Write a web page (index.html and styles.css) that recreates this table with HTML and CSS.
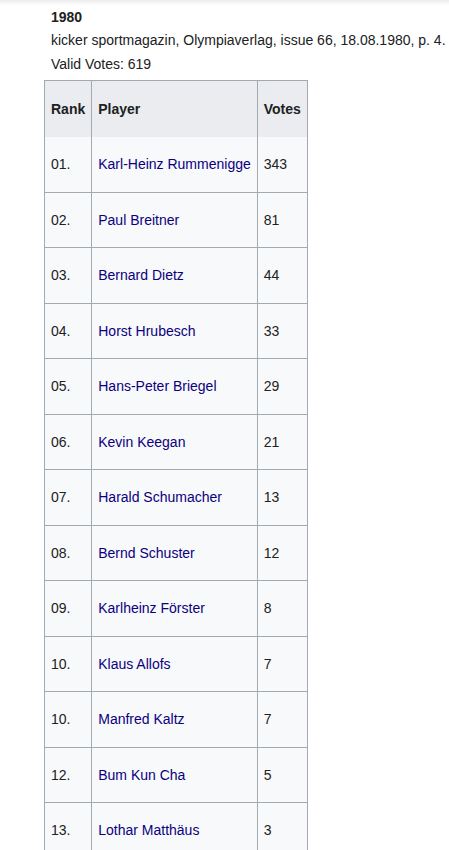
FILE: index.html
```html
<!DOCTYPE html>
<html>
<head>
<meta charset="utf-8">
<link rel="stylesheet" href="styles.css">
</head>
<body>
<div class="topshadow"></div>
<div class="content">
  <p class="year">1980</p>
  <p class="line">kicker sportmagazin, Olympiaverlag, issue 66, 18.08.1980, p. 4.</p>
  <p class="line">Valid Votes: 619</p>
  <table class="wikitable">
    <thead>
      <tr><th>Rank</th><th>Player</th><th>Votes</th></tr>
    </thead>
    <tbody>
      <tr><td>01.</td><td><a href="#">Karl-Heinz Rummenigge</a></td><td>343</td></tr>
      <tr><td>02.</td><td><a href="#">Paul Breitner</a></td><td>81</td></tr>
      <tr><td>03.</td><td><a href="#">Bernard Dietz</a></td><td>44</td></tr>
      <tr><td>04.</td><td><a href="#">Horst Hrubesch</a></td><td>33</td></tr>
      <tr><td>05.</td><td><a href="#">Hans-Peter Briegel</a></td><td>29</td></tr>
      <tr><td>06.</td><td><a href="#">Kevin Keegan</a></td><td>21</td></tr>
      <tr><td>07.</td><td><a href="#">Harald Schumacher</a></td><td>13</td></tr>
      <tr><td>08.</td><td><a href="#">Bernd Schuster</a></td><td>12</td></tr>
      <tr><td>09.</td><td><a href="#">Karlheinz Förster</a></td><td>8</td></tr>
      <tr><td>10.</td><td><a href="#">Klaus Allofs</a></td><td>7</td></tr>
      <tr><td>10.</td><td><a href="#">Manfred Kaltz</a></td><td>7</td></tr>
      <tr><td>12.</td><td><a href="#">Bum Kun Cha</a></td><td>5</td></tr>
      <tr><td>13.</td><td><a href="#">Lothar Matthäus</a></td><td>3</td></tr>
    </tbody>
  </table>
</div>
</body>
</html>
```
FILE: styles.css
```css
html, body {
  margin: 0;
  padding: 0;
  background: #ffffff;
}
body {
  font-family: "Liberation Sans", Arial, sans-serif;
  font-size: 14px;
  color: #202122;
  position: relative;
}
.topshadow {
  position: absolute;
  left: 0;
  right: 0;
  top: 0;
  height: 5px;
  background: linear-gradient(#ececec, rgba(255,255,255,0));
}
.content {
  padding: 6px 0 0 44px;
}
.year {
  margin: 0 0 0 7px;
  font-weight: bold;
  line-height: 22px;
}
.line {
  margin: 0 0 0 7px;
  line-height: 24px;
}
.wikitable {
  margin-top: 4px;
  border-collapse: collapse;
  background: #f8f9fa;
  border: 1px solid #a2a9b1;
}
.wikitable th,
.wikitable td {
  border: 1px solid #a2a9b1;
  padding: 0 6px;
  height: 54.5px;
  text-align: left;
  vertical-align: middle;
}
.wikitable th {
  background: #eaecf0;
  font-weight: bold;
  border-bottom: none;
  height: 55px;
  padding-bottom: 1px;
}
.wikitable tbody tr:first-child td { border-top: none; }
.wikitable a {
  color: #0b0080;
  text-decoration: none;
}
```
